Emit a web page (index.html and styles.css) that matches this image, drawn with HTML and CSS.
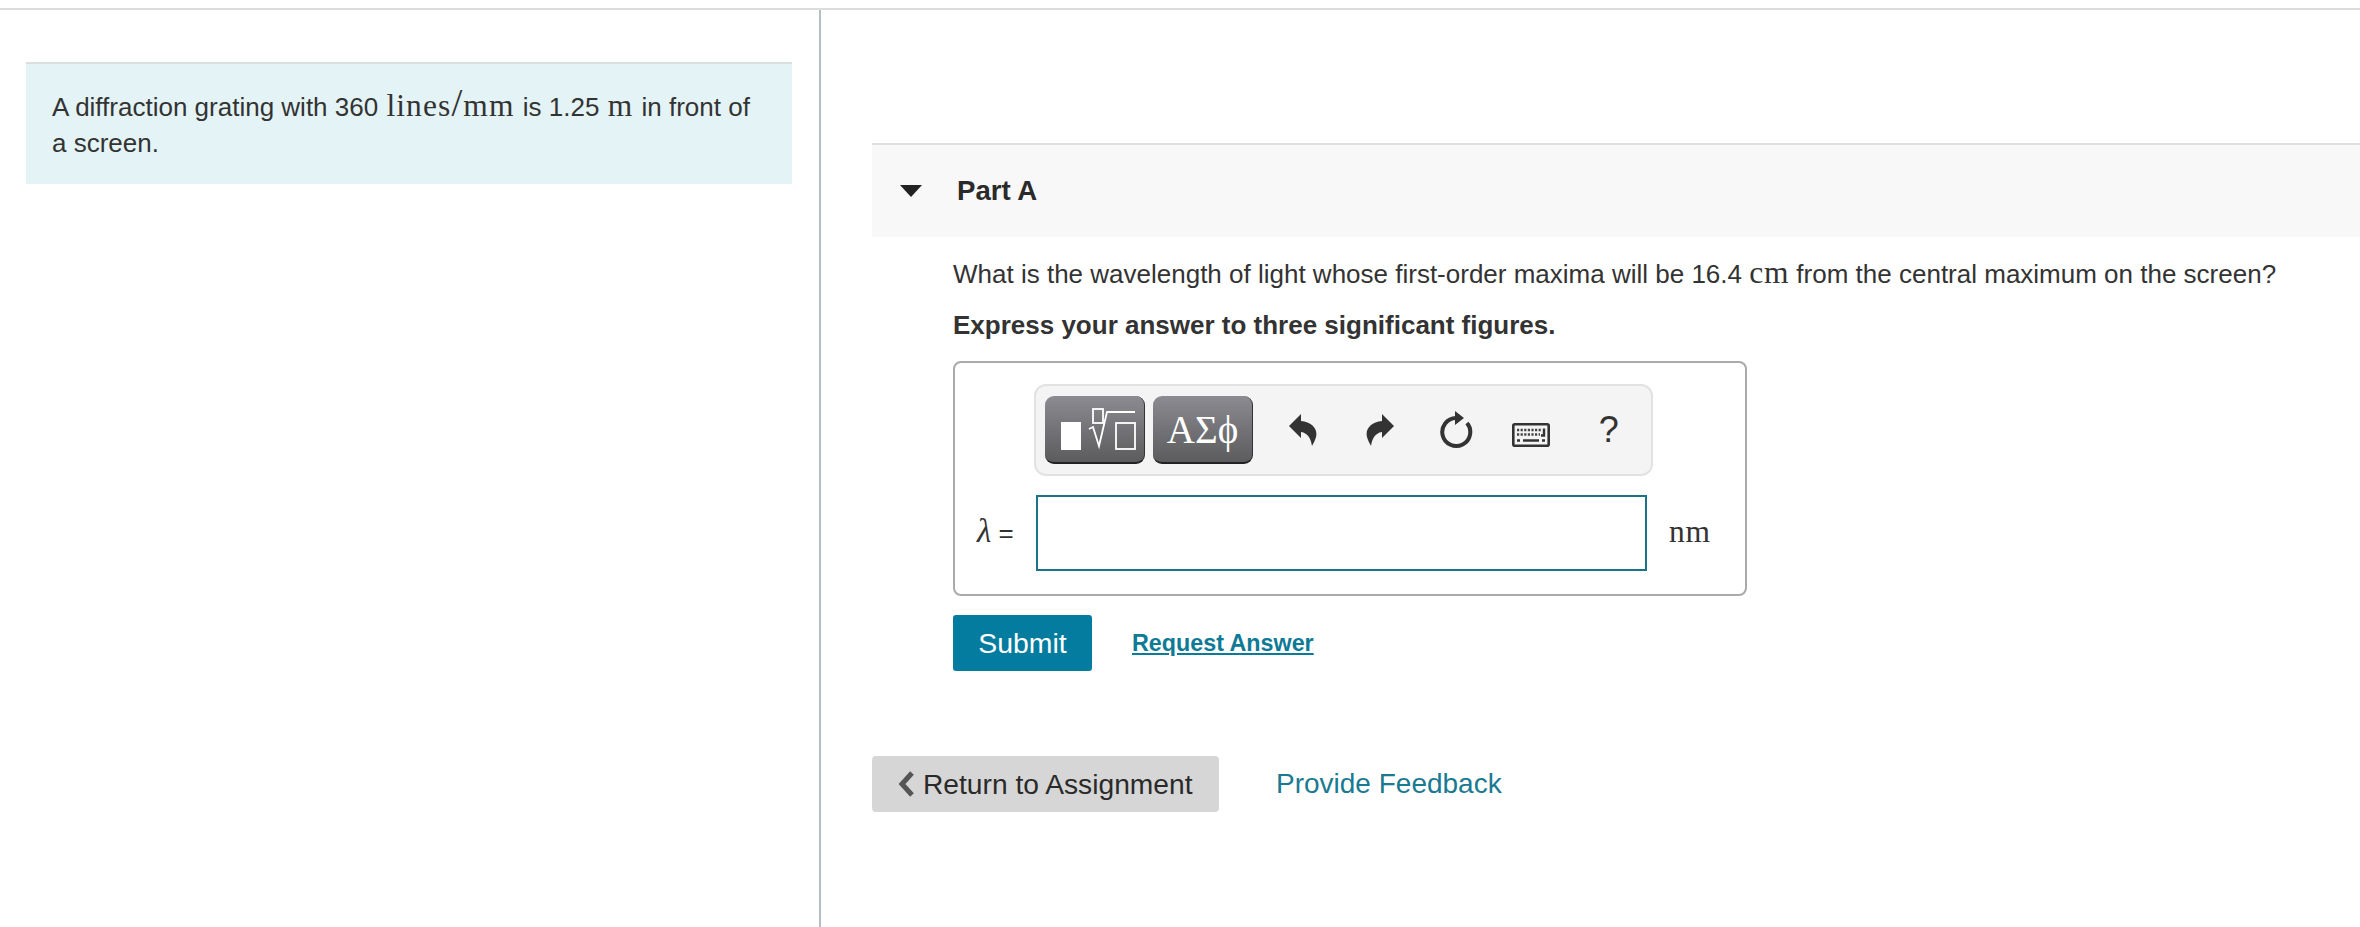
FILE: index.html
```html
<!DOCTYPE html>
<html lang="en">
<head>
    <meta charset="UTF-8">
    <meta name="viewport" content="width=device-width, initial-scale=1.0">
    <title>Part A</title>
    <link rel="stylesheet" href="styles.css">
</head>

<body>
    <div class="page">
        <div class="intro-col">
            <div class="intro">
                A diffraction grating with 360 <span class="math wide">lines<span class="slash">/</span>mm</span> is 1.25 <span class="math wide">m</span> in front of a screen.
            </div>
        </div>

        <div class="main-col">
            <div class="part-head">
                <span class="arrow"></span>
                <span class="part-title">Part A</span>
            </div>

            <div class="part-body">
                <p class="question">What is the wavelength of light whose first-order maxima will be 16.4 <span class="math">cm</span> from the central maximum on the screen?</p>
                <p class="hint">Express your answer to three significant figures.</p>

                <div class="answer-box">
                    <div class="toolbar">
                        <button class="tpl-btn">
                            <svg width="99" height="66" viewBox="0 0 99 66">
                                <rect x="16" y="26" width="20" height="28" fill="#fff"/>
                                <rect x="48" y="13" width="10" height="14" fill="none" stroke="#fff" stroke-width="1.8"/>
                                <path d="M44 33 L48 31 L54 50 L62 16 H90" fill="none" stroke="#fff" stroke-width="1.8"/>
                                <rect x="71" y="27" width="19" height="26" fill="none" stroke="#fff" stroke-width="1.8"/>
                            </svg>
                        </button>
                        <button class="tpl-btn greek">ΑΣϕ</button>

                        <span class="tool first">
                            <svg width="28" height="33" viewBox="0 0 28 33"><path d="M0 12 L12 0 V7 C23 8 29 15 27 23 C26 27 24 30 23 32 C22 25 19 19 12 18 V24 Z" fill="#333"/></svg>
                        </span>
                        <span class="tool">
                            <svg width="28" height="33" viewBox="0 0 28 33"><path d="M28 12 L16 0 V7 C5 8 -1 15 1 23 C2 27 4 30 5 32 C6 25 9 19 16 18 V24 Z" fill="#333"/></svg>
                        </span>
                        <span class="tool">
                            <svg width="34" height="38" viewBox="0 0 34 38">
                                <path d="M17 7 A14 14 0 1 0 28 12" fill="none" stroke="#333" stroke-width="4"/>
                                <path d="M16 0 L25 7 L16 14 Z" fill="#333"/>
                            </svg>
                        </span>
                        <span class="tool kbd">
                            <svg width="38" height="24" viewBox="0 0 38 24">
                                <rect x="1.3" y="1.3" width="35.4" height="21.4" rx="1.5" fill="none" stroke="#333" stroke-width="2.6"/>
                                <path d="M5 7 H30" stroke="#444" stroke-width="2.4" stroke-dasharray="2.2 1.4"/>
                                <path d="M5 11.5 H28" stroke="#444" stroke-width="2.4" stroke-dasharray="2.2 1.4"/>
                                <path d="M32 5.5 V12.5 H29" fill="none" stroke="#333" stroke-width="2.4"/>
                                <path d="M5 17.5 H8 M11 17.5 H27 M30 17.5 H33" stroke="#333" stroke-width="2.4"/>
                            </svg>
                        </span>
                        <span class="tool help">?</span>
                    </div>

                    <div class="answer-row">
                        <label class="var"><span class="lambda">λ</span> =</label>
                        <input class="answer-input" type="text">
                        <span class="unit">nm</span>
                    </div>
                </div>

                <div class="actions">
                    <button class="btn-submit">Submit</button>
                    <a class="link-request" href="#">Request Answer</a>
                </div>
            </div>

            <div class="footer-links">
                <button class="btn-return">
                    <svg width="18" height="26" viewBox="0 0 18 26"><path d="M15 2 L5 13 L15 24" fill="none" stroke="#555" stroke-width="5"/></svg>
                    Return to Assignment
                </button>
                <a class="link-feedback" href="#">Provide Feedback</a>
            </div>
        </div>
    </div>
</body>
</html>
```

FILE: styles.css
```css
* {
    box-sizing: border-box;
}

html, body {
    height: 100%;
}

body {
    margin: 0;
    padding-top: 8px;
    background-color: #fff;
    color: #333;
    font-family: "Liberation Sans", Arial, sans-serif;
    font-size: 26px;
    line-height: 36px;
}

.page {
    display: flex;
    height: 100%;
    border-top: 2px solid #dcdcdc;
}

.math {
    font-family: "Liberation Serif", serif;
    font-size: 31.5px;
    line-height: 0;
    letter-spacing: 0.7px;
}

.math.wide {
    margin: 0 1px;
    letter-spacing: 1.1px;
}

.slash {
    font-size: 39px;
}

/*left column*/
.intro-col {
    width: 821px;
    flex: none;
    padding: 52px 27px 0 26px;
    border-right: 2px solid #b5bfc4;
}

.intro {
    height: 122px;
    padding: 25px 34px 0 26px;
    background-color: #e4f4f6;
    border-top: 2px solid #dcdfe0;
}

/*right column*/
.main-col {
    flex: 1;
    padding: 133px 0 0 51px;
}

.part-head {
    display: flex;
    align-items: center;
    height: 94px;
    background-color: #f8f8f8;
    border-top: 2px solid #dfdfdf;
}

.arrow {
    width: 0;
    height: 0;
    margin-left: 28px;
    border-left: 11px solid transparent;
    border-right: 11px solid transparent;
    border-top: 12px solid #222;
}

.part-title {
    margin-left: 35px;
    font-size: 27.6px;
    font-weight: bold;
    color: #2a2a2a;
}

.part-body {
    padding: 19px 0 0 81px;
}

.question {
    margin: 0 0 15px;
    white-space: nowrap;
}

.hint {
    margin: 0 0 18px;
    font-weight: bold;
}

/*answer box*/
.answer-box {
    width: 794px;
    height: 235px;
    padding-top: 21px;
    border: 2px solid #aaa;
    border-radius: 8px;
}

.toolbar {
    display: flex;
    align-items: center;
    width: 619px;
    height: 92px;
    margin-left: 79px;
    padding-left: 9px;
    background-color: #f4f4f4;
    border: 2px solid #e2e2e2;
    border-radius: 12px;
}

.tpl-btn {
    display: flex;
    align-items: center;
    justify-content: center;
    width: 100px;
    height: 68px;
    margin-right: 8px;
    padding: 0;
    border: none;
    border-bottom: 2px solid #222;
    border-right: 1px solid #333;
    border-radius: 9px;
    background: linear-gradient(#8b8b91, #5c5c5e);
    color: #fff;
}

.greek {
    font-family: "Liberation Serif", serif;
    font-size: 39px;
}

.tool {
    display: flex;
    align-items: center;
    justify-content: center;
    width: 76.4px;
    height: 60px;
}

.tool.first {
    margin-left: 4px;
}

.tool.kbd {
    padding: 10px 2px 0 0;
}

.help {
    font-size: 36px;
}

.answer-row {
    display: flex;
    align-items: center;
    margin-top: 19px;
}

.var {
    width: 81px;
    padding-left: 22px;
}

.lambda {
    font-family: "Liberation Serif", serif;
    font-style: italic;
    font-size: 33px;
    line-height: 0;
}

.answer-input {
    width: 611px;
    height: 76px;
    border: 2px solid #1b7389;
    background-color: #fff;
}

.unit {
    margin: -3px 0 0 22px;
    font-family: "Liberation Serif", serif;
    font-size: 31.5px;
    letter-spacing: 0.8px;
}

/*buttons and links*/
.actions {
    display: flex;
    align-items: center;
    margin-top: 19px;
}

.btn-submit {
    width: 139px;
    height: 56px;
    border: none;
    border-radius: 3px;
    background-color: #037c9f;
    color: #fff;
    font-family: inherit;
    font-size: 28.4px;
}

.link-request {
    margin-left: 40px;
    font-size: 23.3px;
    font-weight: bold;
    color: #0d7a96;
}

.footer-links {
    display: flex;
    align-items: center;
    margin-top: 85px;
}

.btn-return {
    display: flex;
    align-items: center;
    gap: 8px;
    width: 347px;
    height: 56px;
    padding: 0 0 0 25px;
    border: none;
    border-radius: 4px;
    background-color: #d6d6d6;
    color: #2a2a2a;
    font-family: inherit;
    font-size: 28.2px;
}

.link-feedback {
    margin-left: 57px;
    font-size: 28px;
    color: #1a7a91;
    text-decoration: none;
}
```
